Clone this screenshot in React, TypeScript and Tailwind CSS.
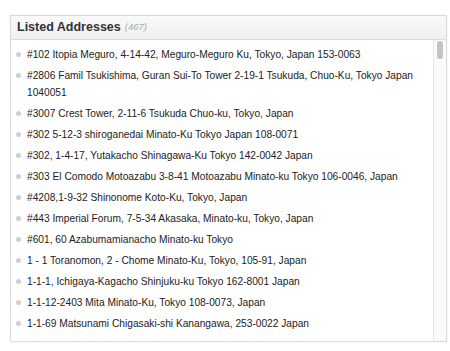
import React from "react";

const items: string[] = [
  "#102 Itopia Meguro, 4-14-42, Meguro-Meguro Ku, Tokyo, Japan 153-0063",
  "#2806 Famil Tsukishima, Guran Sui-To Tower 2-19-1 Tsukuda, Chuo-Ku, Tokyo Japan 1040051",
  "#3007 Crest Tower, 2-11-6 Tsukuda Chuo-ku, Tokyo, Japan",
  "#302 5-12-3 shiroganedai Minato-Ku Tokyo Japan 108-0071",
  "#302, 1-4-17, Yutakacho Shinagawa-Ku Tokyo 142-0042 Japan",
  "#303 El Comodo Motoazabu 3-8-41 Motoazabu Minato-ku Tokyo 106-0046, Japan",
  "#4208,1-9-32 Shinonome Koto-Ku, Tokyo, Japan",
  "#443 Imperial Forum, 7-5-34 Akasaka, Minato-ku, Tokyo, Japan",
  "#601, 60 Azabumamianacho Minato-ku Tokyo",
  "1 - 1 Toranomon, 2 - Chome Minato-Ku, Tokyo, 105-91, Japan",
  "1-1-1, Ichigaya-Kagacho Shinjuku-ku Tokyo 162-8001 Japan",
  "1-1-12-2403 Mita Minato-Ku, Tokyo 108-0073, Japan",
  "1-1-69 Matsunami Chigasaki-shi Kanangawa, 253-0022 Japan",
];

export default function App() {
  return (
    <div
      className="w-[450px] h-[351px] bg-white pt-[15px] pl-[10px] pr-[3px] pb-[9px]"
      style={{ fontFamily: '"Liberation Sans", Arial, sans-serif' }}
    >
      <div className="flex h-full flex-col border border-[#dcdcdc] bg-white shadow-[0_0_2px_rgba(0,0,0,0.08)]">
        <div className="flex h-[24px] shrink-0 items-center border-b border-[#dcdcdc] bg-gradient-to-b from-[#f9f9f9] to-[#f0f0f0] pl-[6px]">
          <span className="text-[12.5px] font-bold text-[#333]">Listed Addresses</span>
          <span className="ml-[4px] text-[9.5px] italic text-[#aaa]">(467)</span>
        </div>
        <div className="flex min-h-0 flex-1">
          <ul className="min-h-0 flex-1 overflow-hidden pl-[5px] pt-[4px] pr-[6px]">
            {items.map((t, i) => (
              <li key={i} className="flex py-[2px] text-[10.2px] leading-[17px] text-[#222]">
                <span className="mt-[6px] mr-[6px] h-[5px] w-[5px] shrink-0 rounded-full bg-[#cfcfcf]" />
                <span>{t}</span>
              </li>
            ))}
          </ul>
          <div className="w-[13px] shrink-0 border-l border-[#e6e6e6] bg-[#fafafa] pt-[1px] pl-[3px]">
            <div className="h-[18px] w-[6px] rounded-full bg-[#c4c4c4]" />
          </div>
        </div>
      </div>
    </div>
  );
}
